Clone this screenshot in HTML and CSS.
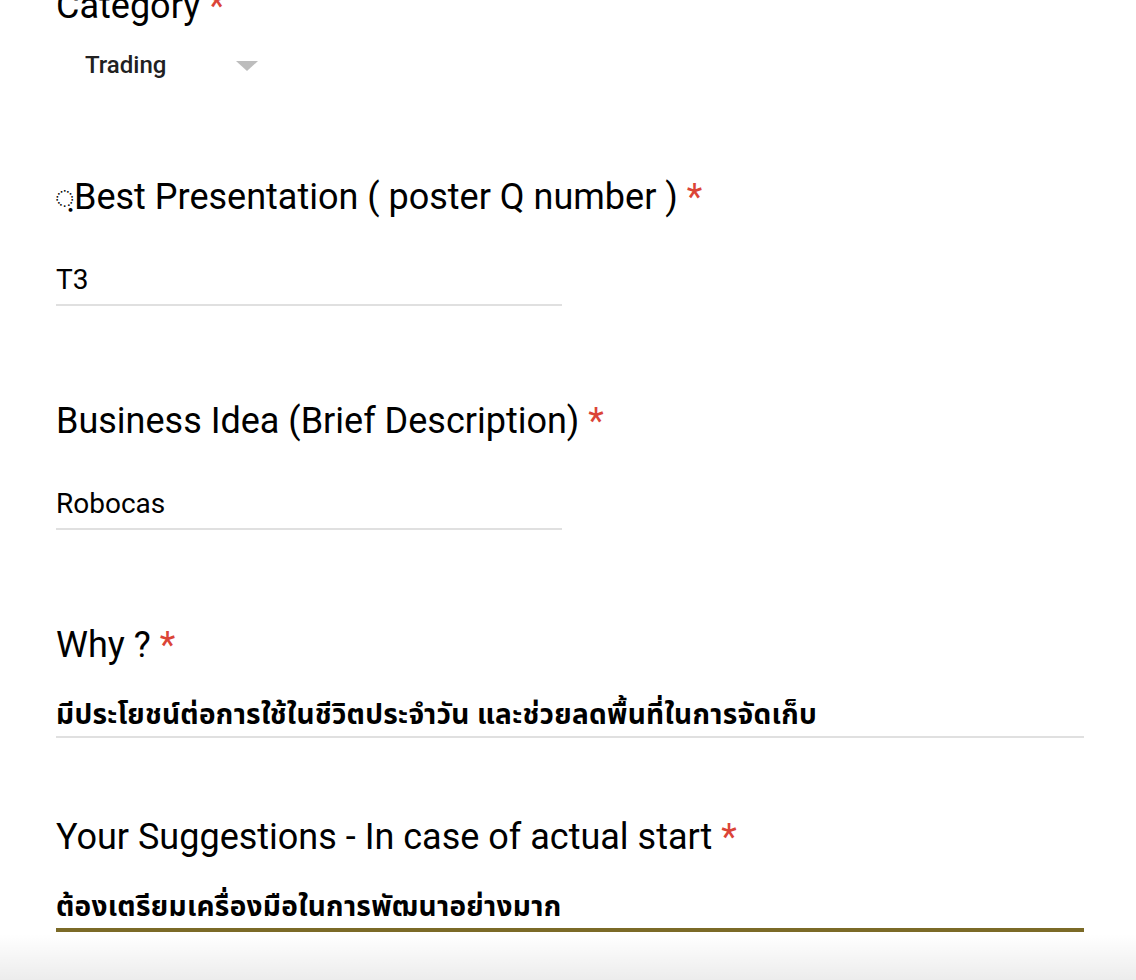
FILE: index.html
```html
<!DOCTYPE html>
<html lang="th">
<head>
<meta charset="utf-8">
<title>Form response</title>
<link rel="stylesheet" href="styles.css">
</head>
<body>
<main class="form">
  <section class="question q-category">
    <div class="title">Category <span class="req">*</span></div>
    <div class="dropdown">
      <span class="dropdown-value">Trading</span>
      <span class="dropdown-arrow"></span>
    </div>
  </section>

  <section class="question q-short q-after-dropdown">
    <div class="title"><span class="mark">◌ฺ</span>Best Presentation ( poster Q number ) <span class="req">*</span></div>
    <div class="answer short">T3</div>
  </section>

  <section class="question q-short">
    <div class="title">Business Idea (Brief Description) <span class="req">*</span></div>
    <div class="answer short">Robocas</div>
  </section>

  <section class="question q-para">
    <div class="title">Why ? <span class="req">*</span></div>
    <div class="answer para thai">มีประโยชน์ต่อการใช้ในชีวิตประจำวัน และช่วยลดพื้นที่ในการจัดเก็บ</div>
  </section>

  <section class="question q-para q-last">
    <div class="title">Your Suggestions - In case of actual start <span class="req">*</span></div>
    <div class="answer para thai focused">ต้องเตรียมเครื่องมือในการพัฒนาอย่างมาก</div>
  </section>
</main>
<div class="bottom-fade"></div>
</body>
</html>
```

FILE: styles.css
```css
html, body {
  margin: 0;
  padding: 0;
  background: #ffffff;
  overflow: hidden;
}

body {
  font-family: Roboto, "Noto Sans Thai", Loma, "Noto Sans", sans-serif;
  color: #000000;
  width: 1136px;
  height: 980px;
  position: relative;
}

.form {
  padding-left: 56px;
  width: 1028px;
  margin-top: -14px;
  display: flex;
  flex-direction: column;
}

.title {
  font-size: 36px;
  line-height: 40px;
  font-weight: 400;
  white-space: nowrap;
}

.req {
  color: #db4437;
}

.mark {
  font-family: "DejaVu Sans", sans-serif;
  font-size: 29px;
  line-height: 0;
  vertical-align: 2px;
}

/* dropdown */
.dropdown {
  margin-top: 23px;
  padding-left: 29px;
  display: flex;
  align-items: center;
  height: 32px;
  width: 173px;
}

.dropdown-value {
  font-size: 24px;
  line-height: 32px;
  font-weight: 500;
  color: #212121;
  flex: 1;
}

.dropdown-arrow {
  width: 0;
  height: 0;
  border-left: 11px solid transparent;
  border-right: 11px solid transparent;
  border-top: 10px solid #bdbdbd;
  margin-top: 2px;
}

/* questions */
.q-after-dropdown {
  margin-top: 96px;
}

.q-short + .q-short,
.q-short + .q-para {
  margin-top: 95px;
}

.q-para + .q-para {
  margin-top: 79px;
}

.answer {
  font-size: 28px;
  line-height: 36px;
  border-bottom: 2px solid #e0e0e0;
}

.answer.short {
  margin-top: 45px;
  padding-bottom: 6px;
  width: 506px;
}

.answer.para {
  margin-top: 32px;
  padding-bottom: 3px;
  width: 1028px;
}

.thai {
  font-weight: 700;
  white-space: nowrap;
  letter-spacing: 0.3px;
}

.answer.focused {
  border-bottom: 4px solid #7b6a27;
}

.bottom-fade {
  position: absolute;
  left: 0;
  right: 0;
  bottom: 0;
  height: 46px;
  background: linear-gradient(to bottom, rgba(0, 0, 0, 0), rgba(0, 0, 0, 0.075));
  pointer-events: none;
}
```
